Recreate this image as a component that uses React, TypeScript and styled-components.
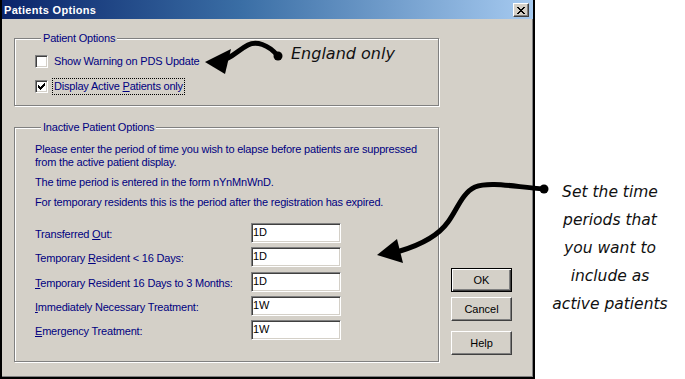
import React from "react";
import styled, { createGlobalStyle, css } from "styled-components";

const GlobalStyle = createGlobalStyle`
  html, body { margin: 0; padding: 0; background: #ffffff; }
  body { width: 685px; height: 379px; overflow: hidden; }
  * { box-sizing: border-box; }
`;

const Page = styled.div`
  position: relative;
  display: flex;
  width: 685px;
  height: 379px;
  background: #ffffff;
  font-family: "Liberation Sans", Arial, sans-serif;
  font-size: 11px;
  letter-spacing: -0.2px;
`;

const Dialog = styled.div`
  display: flex;
  flex-direction: column;
  width: 535px;
  height: 379px;
  background: #d4d0c8;
  border: 2px solid #000000;
  border-top: 0;
  box-shadow: inset -1px -1px 0 #808080;
`;

const TitleBar = styled.div`
  display: flex;
  align-items: center;
  justify-content: space-between;
  height: 19px;
  padding: 0 4px 0 2px;
  background: linear-gradient(90deg, #0a246a 0%, #3a6ea5 45%, #a6caf0 100%);
`;

const Title = styled.span`
  color: #ffffff;
  font-weight: bold;
  font-size: 11px;
  letter-spacing: 0.3px;
`;

const CloseButton = styled.button`
  display: flex;
  align-items: center;
  justify-content: center;
  width: 16px;
  height: 14px;
  padding: 0;
  margin-top: 1px;
  background: #d4d0c8;
  border: 1px solid;
  border-color: #ffffff #404040 #404040 #ffffff;
  box-shadow: inset -1px -1px 0 #808080;
`;

const Body = styled.div`
  flex: 1;
  display: flex;
`;

const Groups = styled.div`
  display: flex;
  flex-direction: column;
  gap: 15px;
  padding: 13px 0 0 12px;
`;

const Group = styled.fieldset<{ $height: number; $padTop: number }>`
  margin: 0;
  width: 425px;
  min-width: 0;
  height: ${(p) => p.$height}px;
  padding: ${(p) => p.$padTop}px 0 0 20px;
  border: 1px solid #808080;
  box-shadow: 1px 1px 0 #ffffff, inset 1px 1px 0 #ffffff;
`;

const Legend = styled.legend`
  margin-left: 6px;
  padding: 0 2px;
  line-height: 13px;
  color: #000080;
  background: #d4d0c8;
`;

const CheckRow = styled.div`
  display: flex;
  align-items: center;
  height: 25px;
`;

const CheckBox = styled.span`
  display: flex;
  align-items: center;
  justify-content: center;
  width: 13px;
  height: 13px;
  background: #ffffff;
  border: 1px solid;
  border-color: #808080 #ffffff #ffffff #808080;
  box-shadow: inset 1px 1px 0 #404040, inset -1px -1px 0 #d4d0c8;
`;

const CheckLabel = styled.span<{ $focused?: boolean }>`
  margin-left: 4px;
  padding: 1px 1px;
  line-height: 13px;
  color: #000080;
  border: 1px dotted ${(p) => (p.$focused ? "#000000" : "transparent")};
`;

const Para = styled.p`
  margin: 0 0 7px;
  line-height: 13px;
  color: #000080;
`;

const FieldList = styled.div`
  display: flex;
  flex-direction: column;
  gap: 4.35px;
  margin-top: 14px;
`;

const FieldRow = styled.div`
  display: grid;
  grid-template-columns: 216px 90px;
  align-items: center;
  height: 20px;
`;

const FieldLabel = styled.label`
  margin-top: 3px;
  color: #000080;
  line-height: 13px;
  white-space: nowrap;
`;

const Key = styled.span`
  text-decoration: underline;
`;

const TextBox = styled.input`
  width: 90px;
  height: 20px;
  padding: 0 0 2px 1px;
  margin: 0;
  background: #ffffff;
  border: 1px solid;
  border-color: #808080 #ffffff #ffffff #808080;
  box-shadow: inset 1px 1px 0 #404040, inset -1px -1px 0 #d4d0c8;
  font-family: "Liberation Sans", Arial, sans-serif;
  font-size: 11px;
  color: #000000;
  outline: none;
`;

const ButtonColumn = styled.div`
  display: flex;
  flex-direction: column;
  justify-content: flex-end;
  margin-left: 12px;
  padding-bottom: 22px;
`;

const DialogButton = styled.button<{ $primary?: boolean; $space: number }>`
  width: 61px;
  height: 24px;
  margin: ${(p) => p.$space}px 0 0;
  padding: 0;
  background: #d4d0c8;
  font-family: "Liberation Sans", Arial, sans-serif;
  font-size: 11px;
  color: #000000;
  border: 1px solid;
  ${(p) =>
    p.$primary
      ? css`
          border-color: #000000;
          box-shadow: inset 1px 1px 0 #ffffff, inset -1px -1px 0 #404040,
            inset -2px -2px 0 #808080;
        `
      : css`
          border-color: #ffffff #404040 #404040 #ffffff;
          box-shadow: inset -1px -1px 0 #808080;
        `}
`;

const SideNote = styled.div`
  flex: 1;
  padding-top: 178px;
  text-align: center;
  font-family: "DejaVu Sans", sans-serif;
  font-style: oblique;
  font-size: 15.5px;
  letter-spacing: 0;
  line-height: 28px;
  color: #111111;
`;

const Callout = styled.div`
  position: absolute;
  left: 291px;
  top: 44px;
  font-family: "DejaVu Sans", sans-serif;
  font-style: oblique;
  font-size: 16px;
  letter-spacing: 0;
  line-height: 20px;
  color: #111111;
`;

const ArrowLayer = styled.svg`
  position: absolute;
  left: 0;
  top: 0;
  width: 685px;
  height: 379px;
  pointer-events: none;
`;

const fields = [
  { label: <>Transferred <Key>O</Key>ut:</>, value: "1D" },
  { label: <>Temporary <Key>R</Key>esident &lt; 16 Days:</>, value: "1D" },
  { label: <><Key>T</Key>emporary Resident 16 Days to 3 Months:</>, value: "1D" },
  { label: <><Key>I</Key>mmediately Necessary Treatment:</>, value: "1W" },
  { label: <><Key>E</Key>mergency Treatment:</>, value: "1W" },
];

export default function App() {
  return (
    <Page>
      <GlobalStyle />
      <Dialog>
        <TitleBar>
          <Title>Patients Options</Title>
          <CloseButton aria-label="Close">
            <svg width="8" height="7" viewBox="0 0 8 7" shapeRendering="crispEdges">
              <path
                d="M0 0h2v1h-2zM6 0h2v1h-2zM1 1h2v1h-2zM5 1h2v1h-2zM2 2h4v1h-4zM3 3h2v1h-2zM2 4h4v1h-4zM1 5h2v1h-2zM5 5h2v1h-2zM0 6h2v1h-2zM6 6h2v1h-2z"
                fill="#000"
              />
            </svg>
          </CloseButton>
        </TitleBar>
        <Body>
          <Groups>
            <Group $height={74} $padTop={4}>
              <Legend>Patient Options</Legend>
              <CheckRow>
                <CheckBox />
                <CheckLabel>Show Warning on PDS Update</CheckLabel>
              </CheckRow>
              <CheckRow>
                <CheckBox>
                  <svg width="7" height="7" viewBox="0 0 7 7" shapeRendering="crispEdges">
                    <path
                      d="M6 0h1v3h-1zM5 1h1v3h-1zM4 2h1v3h-1zM3 3h1v3h-1zM2 4h1v3h-1zM1 3h1v3h-1zM0 2h1v3h-1z"
                      fill="#000"
                    />
                  </svg>
                </CheckBox>
                <CheckLabel $focused>
                  Display Active <Key>P</Key>atients only
                </CheckLabel>
              </CheckRow>
            </Group>
            <Group $height={241} $padTop={9}>
              <Legend>Inactive Patient Options</Legend>
              <Para>
                Please enter the period of time you wish to elapse before patients are suppressed
                <br />
                from the active patient display.
              </Para>
              <Para>The time period is entered in the form nYnMnWnD.</Para>
              <Para>For temporary residents this is the period after the registration has expired.</Para>
              <FieldList>
                {fields.map((f, i) => (
                  <FieldRow key={i}>
                    <FieldLabel>{f.label}</FieldLabel>
                    <TextBox readOnly value={f.value} />
                  </FieldRow>
                ))}
              </FieldList>
            </Group>
          </Groups>
          <ButtonColumn>
            <DialogButton $primary $space={0}>OK</DialogButton>
            <DialogButton $space={5}>Cancel</DialogButton>
            <DialogButton $space={10}>Help</DialogButton>
          </ButtonColumn>
        </Body>
      </Dialog>
      <SideNote>
        Set the time
        <br />
        periods that
        <br />
        you want to
        <br />
        include as
        <br />
        active patients
      </SideNote>
      <Callout>England only</Callout>
      <ArrowLayer viewBox="0 0 685 379">
        <circle cx="278" cy="56" r="4.5" fill="#000" />
        <path
          d="M278 56 C268 44 256 41 248 45 C240 49 236 54 228 58"
          stroke="#000"
          strokeWidth="5"
          fill="none"
          strokeLinecap="round"
        />
        <polygon points="205,62 231,49 225,74" fill="#000" />
        <circle cx="544" cy="189" r="4.5" fill="#000" />
        <path
          d="M544 189 C515 187 490 181 475 187 C462 193 457 210 448 222 C438 236 420 245 400 251"
          stroke="#000"
          strokeWidth="5"
          fill="none"
          strokeLinecap="round"
        />
        <polygon points="377,255 397,239 403,263" fill="#000" />
      </ArrowLayer>
    </Page>
  );
}
